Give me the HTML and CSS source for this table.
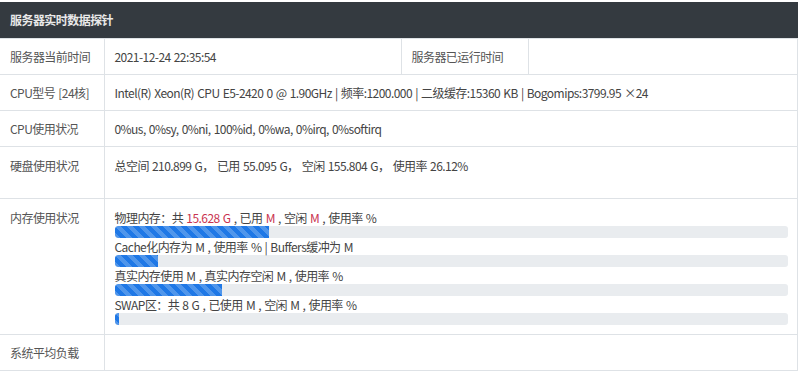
FILE: index.html
```html
<!DOCTYPE html>
<html lang="zh-CN">
<head>
    <meta charset="UTF-8">
    <meta name="viewport" content="width=device-width, initial-scale=1.0">
    <title>服务器实时数据探针</title>
    <link rel="stylesheet" href="styles.css">
</head>
<body>
    <div class="probe">
        <div class="probe-title">服务器实时数据探针</div>
        <table class="probe-table">
            <colgroup>
                <col class="col-label">
                <col class="col-value">
                <col class="col-label2">
                <col>
            </colgroup>
            <tr>
                <td class="label">服务器当前时间</td>
                <td>2021-12-24 22:35:54</td>
                <td class="label">服务器已运行时间</td>
                <td></td>
            </tr>
            <tr>
                <td class="label">CPU型号 [24核]</td>
                <td colspan="3">Intel(R) Xeon(R) CPU E5-2420 0 @ 1.90GHz | 频率:1200.000 | 二级缓存:15360 KB | Bogomips:3799.95 ×24</td>
            </tr>
            <tr>
                <td class="label">CPU使用状况</td>
                <td colspan="3">0%us, 0%sy, 0%ni, 100%id, 0%wa, 0%irq, 0%softirq</td>
            </tr>
            <tr>
                <td class="label top">硬盘使用状况</td>
                <td colspan="3" class="top tall">总空间 210.899 G，&nbsp;已用 55.095 G，&nbsp;空闲 155.804 G，&nbsp;使用率 26.12%</td>
            </tr>
            <tr>
                <td class="label top">内存使用状况</td>
                <td colspan="3" class="top mem">
                    <div class="mem-line">物理内存：共 <span class="red">15.628 G</span> , 已用 <span class="red">M</span> , 空闲 <span class="red">M</span> , 使用率 %</div>
                    <div class="bar"><div class="bar-fill" style="width: 23%"></div></div>
                    <div class="mem-line">Cache化内存为 M , 使用率 % | Buffers缓冲为 M</div>
                    <div class="bar"><div class="bar-fill" style="width: 6.4%"></div></div>
                    <div class="mem-line">真实内存使用 M , 真实内存空闲 M , 使用率 %</div>
                    <div class="bar"><div class="bar-fill" style="width: 16%"></div></div>
                    <div class="mem-line">SWAP区：共 8 G , 已使用 M , 空闲 M , 使用率 %</div>
                    <div class="bar"><div class="bar-fill" style="width: 0.7%"></div></div>
                </td>
            </tr>
            <tr>
                <td class="label">系统平均负载</td>
                <td colspan="3"></td>
            </tr>
        </table>
    </div>
</body>
</html>
```

FILE: styles.css
```css
* {
    margin: 0;
    padding: 0;
    box-sizing: border-box;
}

body {
    font-family: "Noto Sans CJK SC", sans-serif;
    font-size: 12px;
    letter-spacing: -0.55px;
    word-spacing: 1px;
    color: #444;
    background: #fff;
}

.probe {
    width: 798px;
    padding-top: 2px;
}

.probe-title {
    background-color: #343a40;
    color: #e8e8e8;
    font-weight: bold;
    height: 36px;
    line-height: 36px;
    padding-left: 10px;
}

.probe-table {
    width: 100%;
    border-collapse: collapse;
    table-layout: fixed;
    border-right: 1px solid #dee2e6;
}

.col-label {
    width: 104px;
}

.col-value {
    width: 297px;
}

.col-label2 {
    width: 127px;
}

.probe-table td {
    border-top: 1px solid #dee2e6;
    border-bottom: 1px solid #dee2e6;
    border-left: 1px solid #dee2e6;
    height: 36px;
    padding: 0 10px;
    vertical-align: middle;
    white-space: nowrap;
}

.probe-table tr td:first-child {
    border-left: none;
}

.probe-table td.label {
    color: #555;
}

.probe-table td.top {
    vertical-align: top;
    padding-top: 10px;
}

.probe-table td.tall {
    height: 52px;
}

.probe-table td.mem {
    padding-bottom: 9px;
    padding-right: 9px;
}

.mem-line {
    line-height: 17px;
    height: 17px;
}

.red {
    color: #c9344f;
}

/* striped progress bars */
.bar {
    height: 12px;
    background-color: #e9ecef;
    border-radius: 3px;
    overflow: hidden;
}

.bar-fill {
    height: 100%;
    min-width: 4px;
    background-color: #1f78e6;
    background-image: linear-gradient(45deg, rgba(255, 255, 255, .22) 25%, transparent 25%, transparent 50%, rgba(255, 255, 255, .22) 50%, rgba(255, 255, 255, .22) 75%, transparent 75%, transparent);
    background-size: 12px 12px;
    border-radius: 3px 0 0 3px;
}
```
